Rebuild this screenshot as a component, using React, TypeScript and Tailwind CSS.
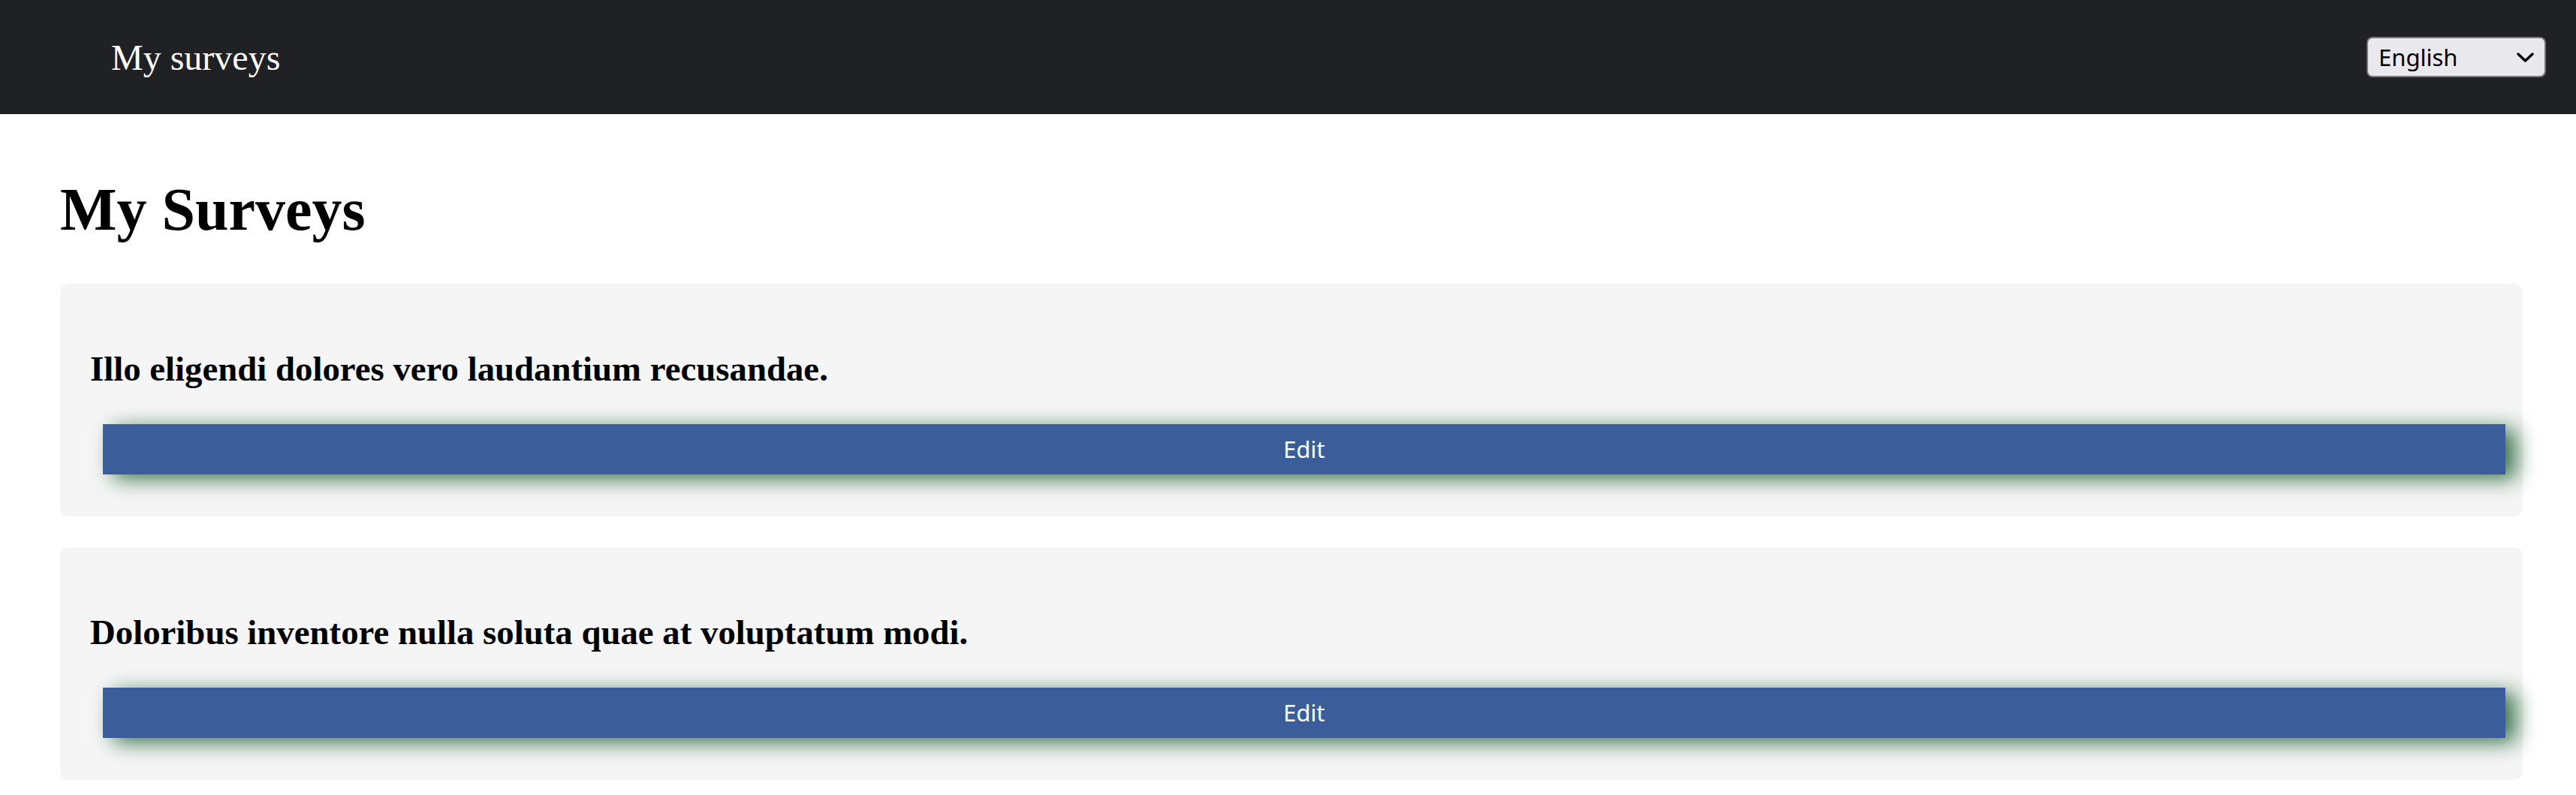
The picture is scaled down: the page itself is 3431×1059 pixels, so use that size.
import React from 'react';

const surveys = [
  { id: 1, title: 'Illo eligendi dolores vero laudantium recusandae.' },
  { id: 2, title: 'Doloribus inventore nulla soluta quae at voluptatum modi.' },
];

function LanguageSelect() {
  return (
    <div className="flex h-[54px] w-[239px] items-center justify-between rounded-[8px] border-2 border-[#767676] bg-[#e9e8ed] pl-[14px] pr-[14px] font-['Noto_Sans',sans-serif] text-[31px] leading-none text-black">
      <span>English</span>
      <svg width="23" height="13" viewBox="0 0 23 13" fill="none">
        <path d="M2 2l9.5 9 9.5-9" stroke="#000" strokeWidth="3.5" strokeLinecap="round" strokeLinejoin="round" />
      </svg>
    </div>
  );
}

function SurveyCard({ title }: { title: string }) {
  return (
    <div className="rounded-[12px] bg-[#f5f5f5] px-[40px] pt-[40px] pb-[56px]">
      <h3 className="mt-[46px] mb-[47px] font-['Liberation_Serif',serif] text-[46.8px] font-bold leading-[54px] text-black">
        {title}
      </h3>
      <div className="-mr-[17px] pl-[17px]">
        <button className="flex h-[67px] w-full items-center justify-center bg-[#3b5d9a] font-['Noto_Sans',sans-serif] text-[31px] text-white shadow-[14px_6px_28px_#3a744c]">
          Edit
        </button>
      </div>
    </div>
  );
}

export default function App() {
  return (
    <div className="min-h-screen bg-white">
      <nav className="flex h-[152px] items-center justify-between bg-[#1f2125] pl-[148px] pr-[40px]">
        <span className="font-['Liberation_Serif',serif] text-[48px] leading-[55px] text-white">My surveys</span>
        <LanguageSelect />
      </nav>

      <main className="pl-[80px] pr-[71px] pt-[28px]">
        <h1 className="my-[53px] font-['Liberation_Serif',serif] text-[80px] font-bold leading-[92px] text-black">
          My Surveys
        </h1>
        <div className="flex flex-col gap-[41px]">
          {surveys.map((s) => (
            <SurveyCard key={s.id} title={s.title} />
          ))}
        </div>
      </main>
    </div>
  );
}
